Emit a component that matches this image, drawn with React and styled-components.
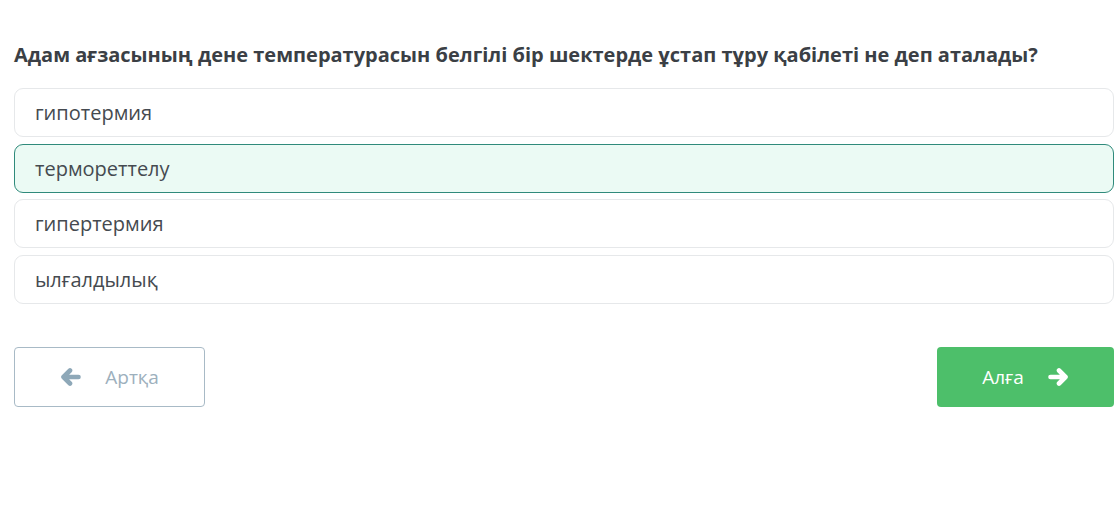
import styled, { createGlobalStyle } from "styled-components";

const GlobalStyle = createGlobalStyle`
  body {
    margin: 0;
    background: #fff;
    font-family: "Open Sans", "Noto Sans", sans-serif;
  }
`;

const Page = styled.div`
  padding: 41px 1px 0 14px;
`;

const Question = styled.h2`
  margin: 0 0 19px;
  font-size: 20px;
  font-weight: 700;
  color: #3b3f45;
  line-height: 28px;
`;

const Options = styled.div`
  display: flex;
  flex-direction: column;
  gap: 6.7px;
`;

const Option = styled.div`
  height: 47px;
  display: flex;
  align-items: center;
  padding: 0 20px;
  border-radius: 9px;
  border: 1px solid ${(p) => (p.$selected ? "#2f8a7b" : "#e6e8ea")};
  background: ${(p) => (p.$selected ? "#ebfaf4" : "#fff")};
  font-size: 20px;
  color: #454a50;
`;

const Nav = styled.div`
  display: flex;
  justify-content: space-between;
  margin-top: 43px;
`;

const NavButton = styled.button`
  height: 60px;
  display: flex;
  align-items: center;
  justify-content: center;
  gap: 24px;
  border-radius: 4px;
  font-family: "Open Sans", "Noto Sans", sans-serif;
  font-size: 19px;
  cursor: pointer;
`;

const BackButton = styled(NavButton)`
  width: 191px;
  background: #fff;
  border: 1px solid #a8bac6;
  color: #9db0bd;
  svg {
    color: #8ea8b8;
  }
`;

const NextButton = styled(NavButton)`
  width: 177px;
  background: #4dbf6a;
  border: none;
  color: #fff;
`;

// chunky solid arrow, points left unless flipped
function Arrow({ flip }) {
  return (
    <svg
      width="21"
      height="18"
      viewBox="0 0 21 18"
      style={flip ? { transform: "scaleX(-1)" } : undefined}
    >
      <path
        d="M3.5 9H18.5M3.5 9L10 2.5M3.5 9L10 15.5"
        fill="none"
        stroke="currentColor"
        strokeWidth="4.6"
        strokeLinecap="round"
        strokeLinejoin="round"
      />
    </svg>
  );
}

const options = ["гипотермия", "термореттелу", "гипертермия", "ылғалдылық"];

export default function App() {
  return (
    <>
      <GlobalStyle />
      <Page>
        <Question>
          Адам ағзасының дене температурасын белгілі бір шектерде ұстап тұру
          қабілеті не деп аталады?
        </Question>
        <Options>
          {options.map((o, i) => (
            <Option key={o} $selected={i === 1}>
              {o}
            </Option>
          ))}
        </Options>
        <Nav>
          <BackButton>
            <Arrow />
            Артқа
          </BackButton>
          <NextButton>
            Алға
            <Arrow flip />
          </NextButton>
        </Nav>
      </Page>
    </>
  );
}
